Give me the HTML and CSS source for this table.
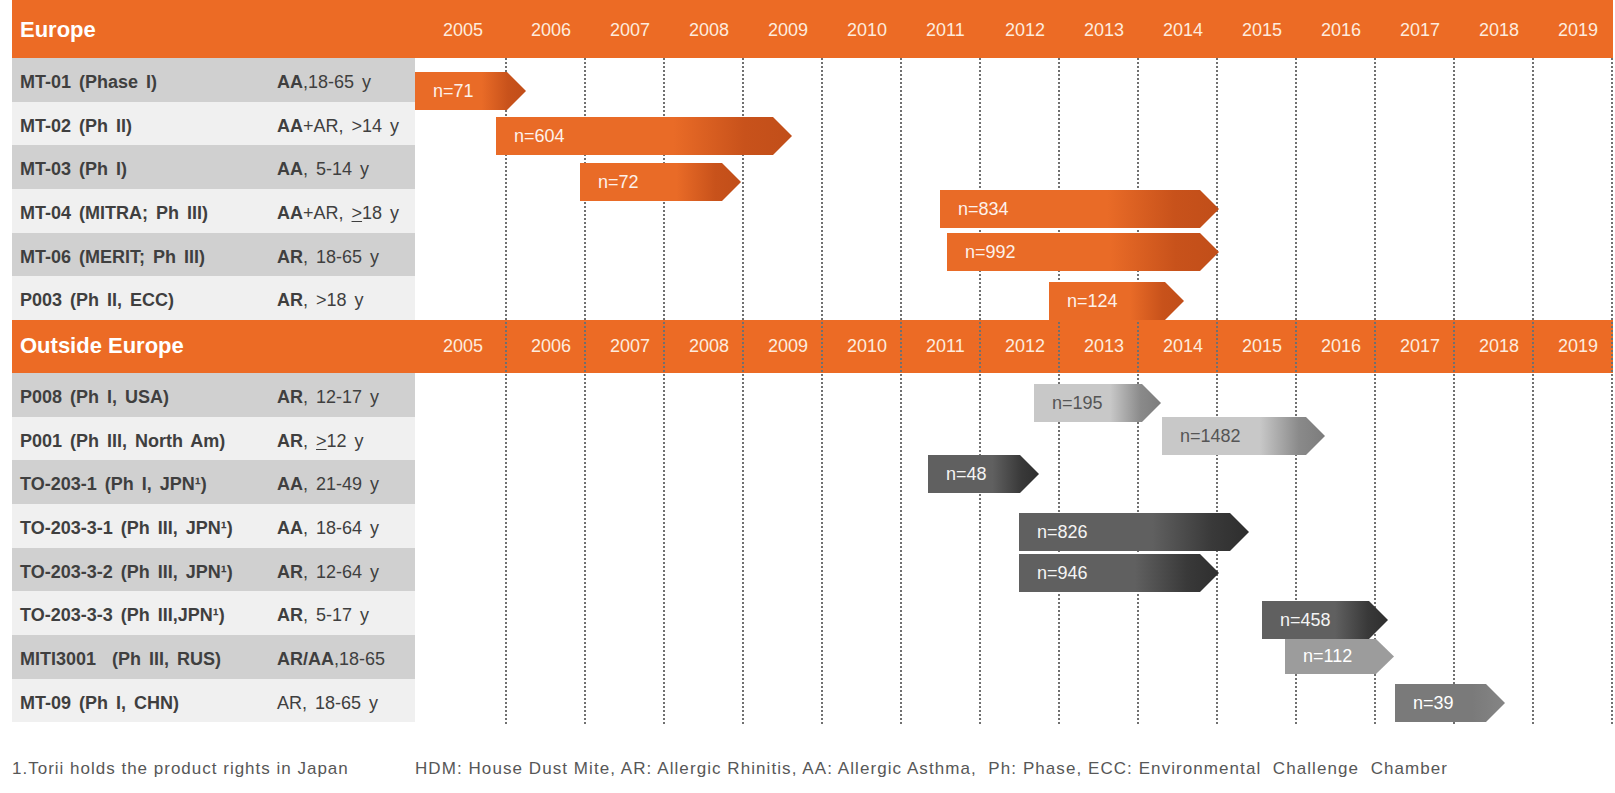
FILE: index.html
```html
<!DOCTYPE html>
<html lang="en">
<head>
<meta charset="utf-8">
<title>Clinical trials timeline</title>
<link rel="stylesheet" href="styles.css">
</head>
<body>
<div class="page">
  <div class="chart">
    <section class="group">
      <div class="head head-europe">
        <div class="head-title">Europe</div>
        <div class="years">
          <div class="year first">2005</div><div class="year">2006</div><div class="year">2007</div><div class="year">2008</div><div class="year">2009</div><div class="year">2010</div><div class="year">2011</div><div class="year">2012</div><div class="year">2013</div><div class="year">2014</div><div class="year">2015</div><div class="year">2016</div><div class="year">2017</div><div class="year">2018</div><div class="year">2019</div>
        </div>
      </div>
      <div class="row dark"><div class="label"><span class="name">MT-01 (Phase I)</span><span class="pop"><b>AA</b>,18-65 y</span></div></div>
      <div class="row light"><div class="label"><span class="name">MT-02 (Ph II)</span><span class="pop"><b>AA</b>+AR, &gt;14 y</span></div></div>
      <div class="row dark"><div class="label"><span class="name">MT-03 (Ph I)</span><span class="pop"><b>AA</b>, 5-14 y</span></div></div>
      <div class="row light"><div class="label"><span class="name">MT-04 (MITRA; Ph III)</span><span class="pop"><b>AA</b>+AR, <u>&gt;</u>18 y</span></div></div>
      <div class="row dark"><div class="label"><span class="name">MT-06 (MERIT; Ph III)</span><span class="pop"><b>AR</b>, 18-65 y</span></div></div>
      <div class="row light"><div class="label"><span class="name">P003 (Ph II, ECC)</span><span class="pop"><b>AR</b>, &gt;18 y</span></div></div>
    </section>
    <section class="group">
      <div class="head head-outside">
        <div class="head-title">Outside Europe</div>
        <div class="years">
          <div class="year first">2005</div><div class="year">2006</div><div class="year">2007</div><div class="year">2008</div><div class="year">2009</div><div class="year">2010</div><div class="year">2011</div><div class="year">2012</div><div class="year">2013</div><div class="year">2014</div><div class="year">2015</div><div class="year">2016</div><div class="year">2017</div><div class="year">2018</div><div class="year">2019</div>
        </div>
      </div>
      <div class="row dark"><div class="label"><span class="name">P008 (Ph I, USA)</span><span class="pop"><b>AR</b>, 12-17 y</span></div></div>
      <div class="row light"><div class="label"><span class="name">P001 (Ph III, North Am)</span><span class="pop"><b>AR</b>, <u>&gt;</u>12 y</span></div></div>
      <div class="row dark"><div class="label"><span class="name">TO-203-1 (Ph I, JPN¹)</span><span class="pop"><b>AA</b>, 21-49 y</span></div></div>
      <div class="row light"><div class="label"><span class="name">TO-203-3-1 (Ph III, JPN¹)</span><span class="pop"><b>AA</b>, 18-64 y</span></div></div>
      <div class="row dark"><div class="label"><span class="name">TO-203-3-2 (Ph III, JPN¹)</span><span class="pop"><b>AR</b>, 12-64 y</span></div></div>
      <div class="row light"><div class="label"><span class="name">TO-203-3-3 (Ph III,JPN¹)</span><span class="pop"><b>AR</b>, 5-17 y</span></div></div>
      <div class="row dark"><div class="label"><span class="name">MITI3001  (Ph III, RUS)</span><span class="pop"><b>AR/AA</b>,18-65</span></div></div>
      <div class="row light"><div class="label"><span class="name">MT-09 (Ph I, CHN)</span><span class="pop">AR, 18-65 y</span></div></div>
    </section>

    <div class="gridlines">
      <i class="vline"></i><i class="vline"></i><i class="vline"></i><i class="vline"></i><i class="vline"></i><i class="vline"></i><i class="vline"></i><i class="vline"></i><i class="vline"></i><i class="vline"></i><i class="vline"></i><i class="vline"></i><i class="vline"></i><i class="vline"></i><i class="vline"></i>
    </div>

    <div class="bars">
      <div class="bar orange" style="left:403px;top:72px;width:111px">n=71</div>
      <div class="bar orange" style="left:484px;top:117px;width:296px">n=604</div>
      <div class="bar orange" style="left:568px;top:163px;width:161px">n=72</div>
      <div class="bar orange" style="left:928px;top:190px;width:279px">n=834</div>
      <div class="bar orange" style="left:935px;top:233px;width:272px">n=992</div>
      <div class="bar orange" style="left:1037px;top:282px;width:135px">n=124</div>
      <div class="bar light" style="left:1022px;top:384px;width:127px">n=195</div>
      <div class="bar light" style="left:1150px;top:417px;width:163px">n=1482</div>
      <div class="bar dark" style="left:916px;top:455px;width:111px">n=48</div>
      <div class="bar dark" style="left:1007px;top:513px;width:230px">n=826</div>
      <div class="bar dark" style="left:1007px;top:554px;width:200px">n=946</div>
      <div class="bar dark" style="left:1250px;top:601px;width:126px">n=458</div>
      <div class="bar medium short" style="left:1273px;top:639px;width:109px">n=112</div>
      <div class="bar steel" style="left:1383px;top:684px;width:110px">n=39</div>
    </div>
  </div>

  <div class="footer">
    <div class="note">1.Torii holds the product rights in Japan</div>
    <div class="legend">HDM: House Dust Mite, AR: Allergic Rhinitis, AA: Allergic Asthma,  Ph: Phase, ECC: Environmental  Challenge  Chamber</div>
  </div>
</div>
</body>
</html>
```

FILE: styles.css
```css
* { box-sizing: border-box; }

body {
  margin: 0;
  background: #ffffff;
  font-family: "Liberation Sans", Arial, sans-serif;
  color: #3f3f3f;
}

.page {
  padding-left: 12px;
  width: 1613px;
}

.chart {
  position: relative;
  width: 1601px;
}

.head {
  display: flex;
  align-items: center;
  background: #ec6b25;
  color: #ffffff;
}

.head-europe { height: 58px; padding-top: 2px; }
.head-outside { height: 53px; }

.head-title {
  width: 403px;
  padding-left: 8px;
  font-size: 22px;
  font-weight: bold;
  white-space: pre;
}

.years {
  display: flex;
  font-size: 18px;
  color: #fdebde;
}

.year {
  width: 79px;
  padding-left: 25px;
}

.year.first {
  width: 91px;
  padding-left: 28px;
}

.row {
  display: flex;
  height: 43.67px;
}

.label {
  width: 403px;
  display: flex;
  align-items: center;
  padding-top: 5px;
  font-size: 18px;
  line-height: 1.15;
  word-spacing: 3px;
  white-space: pre;
}

.row.dark .label { background: #d0d0d0; }
.row.light .label { background: #f0f0f0; }

.name {
  width: 265px;
  padding-left: 8px;
  font-weight: bold;
}

.pop b { font-weight: bold; }
.pop u { text-decoration-thickness: 1px; text-underline-offset: 2px; }

.gridlines {
  position: absolute;
  left: 493px;
  top: 58px;
  height: 666px;
  display: flex;
}

.vline {
  display: block;
  width: 2px;
  height: 100%;
  margin-right: 77px;
  background: repeating-linear-gradient(to bottom, #707070 0 2px, transparent 2px 4px);
}

.bars {
  position: absolute;
  inset: 0;
}

.bar {
  position: absolute;
  height: 38px;
  display: flex;
  align-items: center;
  padding-left: 18px;
  font-size: 18px;
  color: #fdf1ea;
  clip-path: polygon(0 0, calc(100% - 19px) 0, 100% 50%, calc(100% - 19px) 100%, 0 100%);
}

.bar.short {
  height: 35px;
  clip-path: polygon(0 0, calc(100% - 18px) 0, 100% 50%, calc(100% - 18px) 100%, 0 100%);
}

.bar.orange {
  background: linear-gradient(to right, #e96b27 0%, #e96b27 60%, #c8521b 84%, #c14e19 100%);
}

.bar.light {
  color: #555555;
  background: linear-gradient(to right, #c8c8c8 0%, #c8c8c8 60%, #8a8a8a 84%, #7c7c7c 100%);
}

.bar.dark {
  color: #f4f4f4;
  background: linear-gradient(to right, #606060 0%, #606060 58%, #393939 84%, #2e2e2e 100%);
}

.bar.medium {
  color: #ffffff;
  background: #9c9c9c;
}

.bar.steel {
  color: #ffffff;
  background: linear-gradient(to right, #7a7a7a 0%, #7a7a7a 70%, #858585 100%);
}

.footer {
  display: flex;
  margin-top: 37px;
  font-size: 17px;
  line-height: 20px;
  color: #575757;
  letter-spacing: 1px;
}

.note {
  width: 403px;
}

.legend {
  white-space: pre;
  letter-spacing: 1.07px;
}
```
